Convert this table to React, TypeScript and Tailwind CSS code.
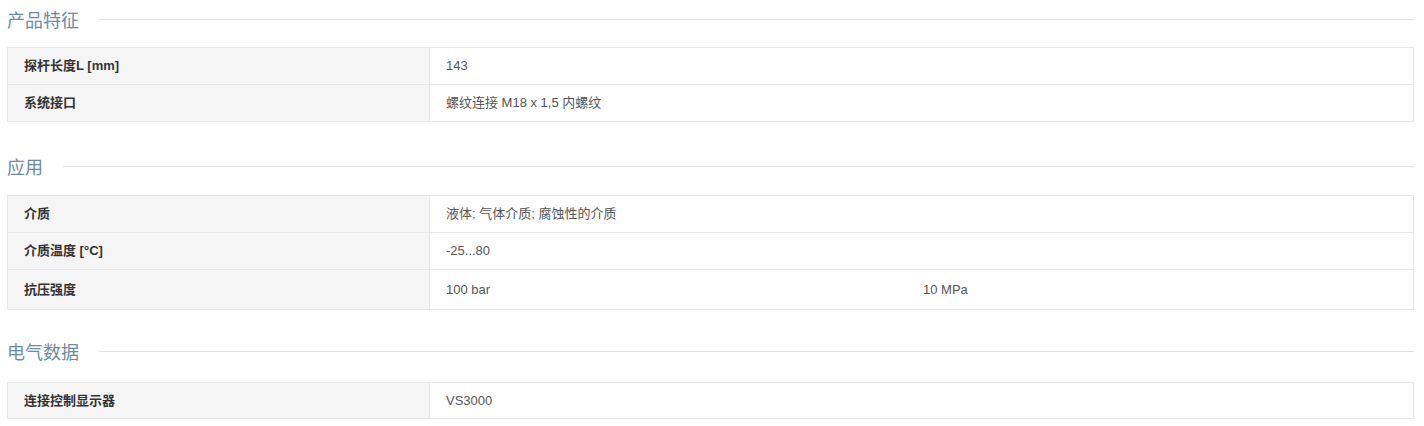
import React from "react";

type Row = { label: string; values: string[]; tall?: boolean; short?: boolean };

const sections: { title: string; rows: Row[] }[] = [
  {
    title: "产品特征",
    rows: [
      { label: "探杆长度L [mm]", values: ["143"] },
      { label: "系统接口", values: ["螺纹连接 M18 x 1,5 内螺纹"] },
    ],
  },
  {
    title: "应用",
    rows: [
      { label: "介质", values: ["液体; 气体介质; 腐蚀性的介质"] },
      { label: "介质温度 [°C]", values: ["-25...80"] },
      { label: "抗压强度", values: ["100 bar", "10 MPa"], tall: true },
    ],
  },
  {
    title: "电气数据",
    rows: [{ label: "连接控制显示器", values: ["VS3000"], short: true }],
  },
];

export default function App() {
  return (
    <div
      className="w-[1424px] h-[426px] bg-white pl-[7px] pr-[10px] overflow-hidden"
      style={{ fontFamily: '"Liberation Sans", "Noto Sans CJK SC", sans-serif' }}
    >
      {sections.map((s, si) => (
        <div key={s.title} className={si === 0 ? "" : si === 1 ? "mt-[25px]" : "mt-[22px]"}>
          <div className="flex items-center h-[38px]">
            <span className="text-[18px] leading-none text-[#6b8ba4] font-normal" style={{ fontFamily: '"Noto Sans CJK SC", sans-serif' }}>
              {s.title}
            </span>
            <div className="flex-1 h-px bg-[#e3e3e3] ml-[20px]" />
          </div>
          <div className={`${si === 0 ? "mt-[9px]" : si === 1 ? "mt-[10px]" : "mt-[12px]"} border border-[#e8e8e8]`}>
            {s.rows.map((r, ri) => (
              <div
                key={r.label}
                className={`flex ${ri > 0 ? "border-t border-[#e8e8e8]" : ""} ${r.tall ? "h-[40px]" : r.short ? "h-[35px]" : ri > 0 ? "h-[37px]" : "h-[36px]"}`}
              >
                <div className="w-[422px] shrink-0 bg-[#f5f5f5] border-r border-[#e8e8e8] flex items-center pl-[16px] text-[13px] font-bold text-[#333333]">
                  {r.label}
                </div>
                {r.values.length === 1 ? (
                  <div className="flex-1 flex items-center pl-[16px] text-[13px] text-[#555555]">
                    {r.values[0]}
                  </div>
                ) : (
                  <div className="flex-1 flex">
                    <div className="w-[477px] flex items-center pl-[16px] text-[13px] text-[#555555]">
                      {r.values[0]}
                    </div>
                    <div className="flex-1 flex items-center pl-[16px] text-[13px] text-[#555555]">
                      {r.values[1]}
                    </div>
                  </div>
                )}
              </div>
            ))}
          </div>
        </div>
      ))}
    </div>
  );
}
